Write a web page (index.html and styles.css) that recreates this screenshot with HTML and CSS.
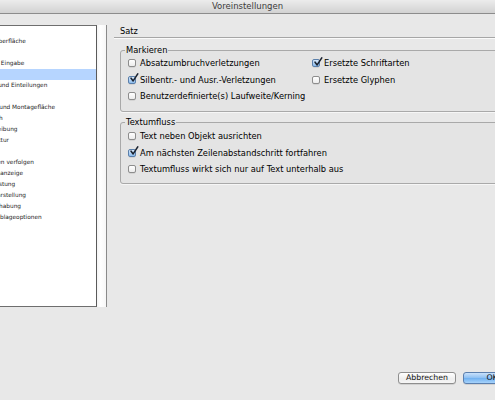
FILE: index.html
```html
<!DOCTYPE html>
<html lang="de">
<head>
<meta charset="utf-8">
<title>Voreinstellungen</title>
<link rel="stylesheet" href="styles.css">
</head>
<body>
<div class="window">
  <div class="titlebar">Voreinstellungen</div>
  <div class="content">
    <div class="side">
      <ul class="list">
        <li>Allgemein</li>
        <li>Benutzeroberfläche</li>
        <li>Eingabe</li>
        <li>Erweiterte Eingabe</li>
        <li class="selected">Satz</li>
        <li>Einheiten und Einteilungen</li>
        <li>Raster</li>
        <li>Hilfslinien und Montagefläche</li>
        <li>Wörterbuch</li>
        <li>Rechtschreibung</li>
        <li>Autokorrektur</li>
        <li>Notizen</li>
        <li>Änderungen verfolgen</li>
        <li>Textmodusanzeige</li>
        <li>Anzeigeleistung</li>
        <li>Schwarzdarstellung</li>
        <li>Dateihandhabung</li>
        <li>Zwischenablageoptionen</li>
      </ul>
      <div class="scroll"></div>
    </div>
    <div class="main">
      <div class="section-title">Satz</div>
      <div class="rule"></div>
      <fieldset class="group">
        <legend>Markieren</legend>
        <div class="grid">
          <label class="check"><span class="box"></span>Absatzumbruchverletzungen</label>
          <label class="check"><span class="box checked"><svg viewBox="0 0 12 12"><path d="M2.5 6.2 L5 9.5 L10.5 1" fill="none" stroke="#1b2330" stroke-width="1.9" stroke-linecap="round" stroke-linejoin="round"/></svg></span>Ersetzte Schriftarten</label>
          <label class="check"><span class="box checked"><svg viewBox="0 0 12 12"><path d="M2.5 6.2 L5 9.5 L10.5 1" fill="none" stroke="#1b2330" stroke-width="1.9" stroke-linecap="round" stroke-linejoin="round"/></svg></span>Silbentr.- und Ausr.-Verletzungen</label>
          <label class="check"><span class="box"></span>Ersetzte Glyphen</label>
          <label class="check wide"><span class="box"></span>Benutzerdefinierte(s) Laufweite/Kerning</label>
        </div>
      </fieldset>
      <fieldset class="group second">
        <legend>Textumfluss</legend>
        <div class="stack">
          <label class="check"><span class="box"></span>Text neben Objekt ausrichten</label>
          <label class="check"><span class="box checked"><svg viewBox="0 0 12 12"><path d="M2.5 6.2 L5 9.5 L10.5 1" fill="none" stroke="#1b2330" stroke-width="1.9" stroke-linecap="round" stroke-linejoin="round"/></svg></span>Am nächsten Zeilenabstandschritt fortfahren</label>
          <label class="check"><span class="box"></span>Textumfluss wirkt sich nur auf Text unterhalb aus</label>
        </div>
      </fieldset>
    </div>
  </div>
  <div class="footer">
    <button class="btn">Abbrechen</button>
    <button class="btn primary">OK</button>
  </div>
</div>
</body>
</html>
```

FILE: styles.css
```css
html, body {
  margin: 0;
  padding: 0;
}
body {
  width: 495px;
  height: 400px;
  overflow: hidden;
  background: #e8e8e8;
  font-family: "DejaVu Sans", "Liberation Sans", sans-serif;
  color: #000;
}
.window {
  width: 495px;
  height: 400px;
  display: flex;
  flex-direction: column;
  overflow: hidden;
}
.titlebar {
  height: 14px;
  box-sizing: border-box;
  border-bottom: 1px solid #8c8c8c;
  background: linear-gradient(#ececec, #d2d2d2);
  text-align: center;
  font-size: 8.5px;
  line-height: 13px;
  color: #3c3c3c;
}
.content {
  display: flex;
  align-items: flex-start;
  flex: 0 0 auto;
}
.side {
  display: flex;
  margin-top: 11px;
  height: 282px;
}
.list {
  list-style: none;
  margin: 0;
  padding: 0;
  width: 97px;
  height: 282px;
  box-sizing: border-box;
  background: #fff;
  border-top: 1px solid #6e6e6e;
  border-bottom: 1px solid #6e6e6e;
  border-right: 1.5px solid #5a5a5a;
  overflow: hidden;
}
.list li {
  height: 11px;
  line-height: 11px;
  font-size: 5.8px;
  white-space: nowrap;
  margin-left: -31px;
  color: #1a1a1a;
  opacity: 0.99;
}
.list li:first-child {
  margin-top: -1px;
}
.list li.selected {
  background: #b5d5ff;
  margin-left: 0;
  text-indent: -40px;
}
.scroll {
  width: 10px;
  height: 282px;
  box-sizing: border-box;
  background: linear-gradient(90deg, #f4f4f4, #fff 40%, #f7f7f7);
  border-right: 1px solid #8a8a8a;
}
.main {
  flex: 1;
  padding-left: 7px;
  padding-top: 11px;
  min-width: 0;
}
.section-title {
  font-size: 8.2px;
  line-height: 12px;
  padding-left: 6px;
}
.rule {
  height: 0;
  border-top: 1px solid #a6a6a6;
  border-bottom: 1px solid #fafafa;
  margin-right: -10px;
}
.group {
  margin: 6px -20px 0 6px;
  padding: 0 0 6.5px 0;
  border: 1px solid #a9a9a9;
  border-radius: 3px;
  background: #e4e4e4;
  box-shadow: 0 1px 0 #f6f6f6;
}
.group.second {
  margin-top: 5px;
  padding-top: 1px;
  padding-bottom: 5.5px;
}
.group legend {
  font-size: 8.3px;
  line-height: 10px;
  margin-left: 4px;
  padding: 0 1px;
}
.grid {
  display: grid;
  grid-template-columns: 184px auto;
  margin-left: 7px;
}
.grid .wide {
  grid-column: 1 / 3;
}
.stack {
  display: flex;
  flex-direction: column;
  margin-left: 7px;
}
.check {
  display: flex;
  align-items: center;
  height: 16.5px;
  font-size: 8.3px;
  white-space: nowrap;
  gap: 4px;
}
.box {
  position: relative;
  width: 8px;
  height: 8px;
  box-sizing: border-box;
  border: 1px solid #8d8d8d;
  border-radius: 2px;
  background: linear-gradient(#ffffff, #ececec);
  box-shadow: 0 0.5px 0.5px rgba(0,0,0,0.15);
  flex: 0 0 auto;
}
.box.checked {
  border-color: #5a7fab;
  background: linear-gradient(#d7e8fb, #8dbdee);
}
.box svg {
  position: absolute;
  left: -0.5px;
  top: -3.5px;
  width: 10px;
  height: 10px;
}
.footer {
  flex: 1;
  display: flex;
  justify-content: flex-end;
  align-items: flex-end;
  gap: 7px;
  padding-bottom: 16px;
  margin-right: -26px;
}
.btn {
  height: 12px;
  box-sizing: border-box;
  font-family: "DejaVu Sans", "Liberation Sans", sans-serif;
  font-size: 7.8px;
  line-height: 10px;
  padding: 0;
  border: 1px solid #8e8e8e;
  border-radius: 3px;
  background: linear-gradient(#ffffff, #eeeeee 60%, #f6f6f6);
  color: #111;
  width: 58px;
  box-shadow: 0 0.5px 0.5px rgba(0,0,0,0.2);
}
.btn.primary {
  border-color: #5b7fae;
  background: linear-gradient(#c9e1fb, #8cbff2 50%, #6fb0f0 51%, #a7d3fb);
}
```
